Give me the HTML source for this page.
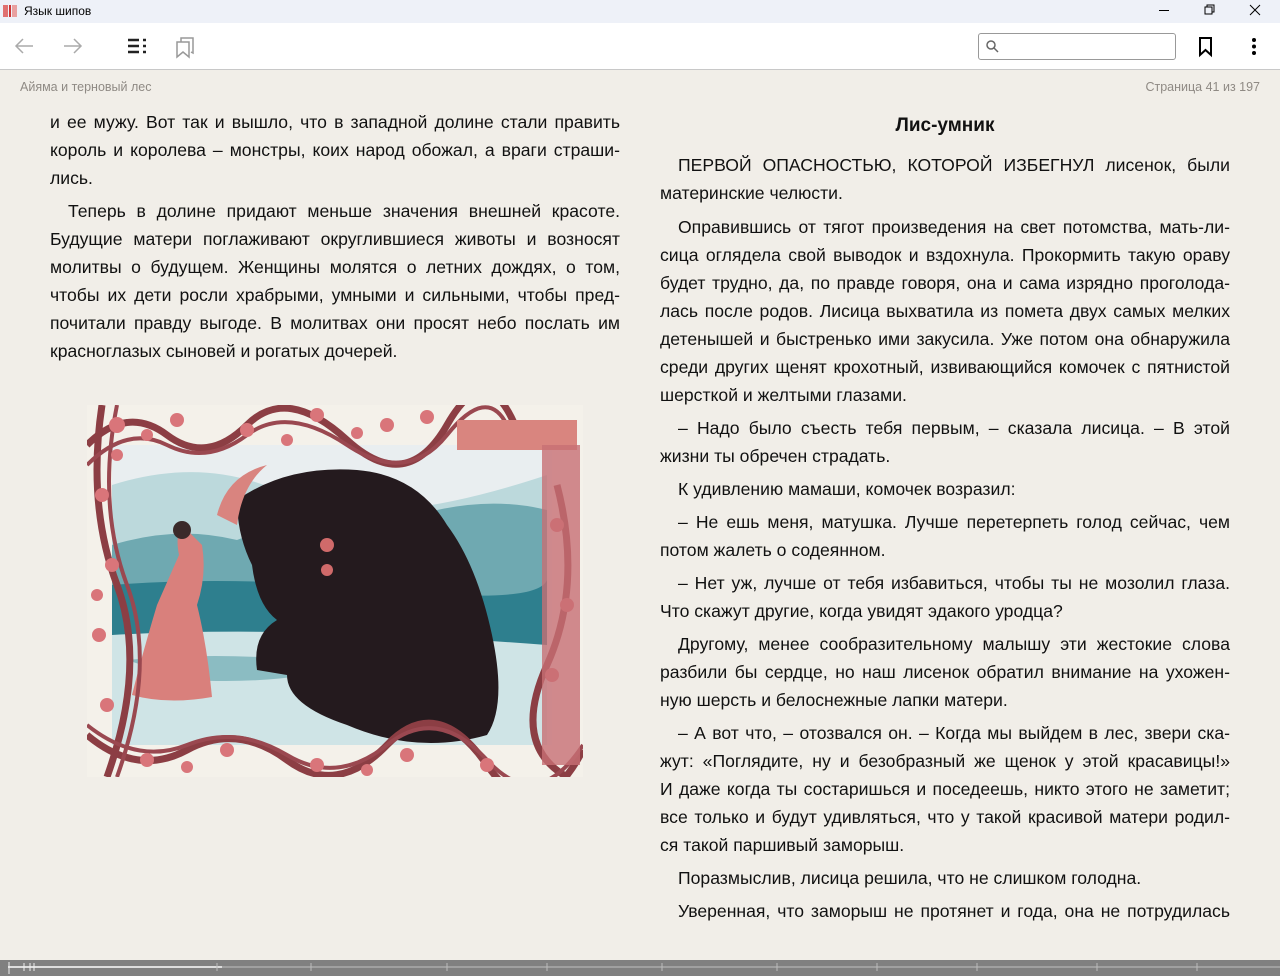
<!DOCTYPE html>
<html><head><meta charset="utf-8"><style>
*{margin:0;padding:0;box-sizing:border-box}
body{width:1280px;height:976px;overflow:hidden;background:#f1eee8;font-family:"Liberation Sans",sans-serif;position:relative}
#tb{position:absolute;left:0;top:0;width:1280px;height:23px;background:#eef1f8;font-size:12px;color:#000}
#tool{position:absolute;left:0;top:23px;width:1280px;height:47px;background:#fff;border-bottom:1px solid #c8c8c8}
.l{position:absolute;font-size:17.6px;color:#111;line-height:22px;height:22px;white-space:nowrap}
.j{text-align:justify;text-align-last:justify}
.i{padding-left:18px}
.L{left:50px;width:570px}.R{left:660px;width:570px}
.hd{position:absolute;top:80px;font-size:12.5px;color:#8f8a84}
#bar{position:absolute;left:0;top:960px;width:1280px;height:16px;background:#808080}
</style></head><body>
<div id="tb">
<svg style="position:absolute;left:2px;top:4px" width="16" height="14"><rect x="1" y="1" width="5" height="12" fill="#e07070"/><rect x="7" y="1" width="2" height="12" fill="#c33"/><rect x="10" y="1" width="5" height="12" fill="#e9a0a0"/></svg>
<span style="position:absolute;left:24px;top:4px">Язык шипов</span>
<svg style="position:absolute;left:1150px;top:4px" width="120" height="14" fill="none" stroke="#000" stroke-width="1"><line x1="9" y1="6.5" x2="19" y2="6.5"/><rect x="55" y="3" width="7" height="7"/><path d="M57 3V1h7v7h-2"/><path d="M100 1l10 10M110 1l-10 10"/></svg>
</div>
<div id="tool">
<svg style="position:absolute;left:0;top:0" width="210" height="47" fill="none" stroke-width="1.5">
<path d="M33 23H16M23 16l-7 7 7 7" stroke="#aaa"/>
<path d="M64 23h17M74 16l7 7-7 7" stroke="#aaa"/>
<g stroke="#222" stroke-width="2.4"><path d="M128 17h11M128 23h11M128 29h11M143 17h3M143 23h3M143 29h3"/></g>
<path d="M177 19h12v15l-6-5-6 5z M181 19v-4h12v15l-2-1" stroke="#999"/>
</svg>
<div style="position:absolute;left:978px;top:10px;width:198px;height:27px;border:1px solid #999;border-radius:3px"></div>
<svg style="position:absolute;left:985px;top:16px" width="14" height="14" fill="none" stroke="#666" stroke-width="1.5"><circle cx="6" cy="6" r="4"/><path d="M9 9l4 4"/></svg>
<svg style="position:absolute;left:1196px;top:13px" width="20" height="22" fill="none" stroke="#000" stroke-width="2"><path d="M4 2h11v17l-5.5-5L4 19z"/></svg>
<svg style="position:absolute;left:1248px;top:14px" width="12" height="20" fill="#000"><circle cx="6" cy="3" r="2"/><circle cx="6" cy="9.5" r="2"/><circle cx="6" cy="16" r="2"/></svg>
</div>
<div class="hd" style="left:20px">Айяма и терновый лес</div>
<div class="hd" style="right:20px">Страница 41 из 197</div>

<div class="l L j" style="top:111px">и ее мужу. Вот так и вышло, что в западной долине стали править</div>
<div class="l L j" style="top:139px">король и королева – монстры, коих народ обожал, а враги страши-</div>
<div class="l L" style="top:167px">лись.</div>
<div class="l L j i" style="top:200px">Теперь в долине придают меньше значения внешней красоте.</div>
<div class="l L j" style="top:228px">Будущие матери поглаживают округлившиеся животы и возносят</div>
<div class="l L j" style="top:256px">молитвы о будущем. Женщины молятся о летних дождях, о том,</div>
<div class="l L j" style="top:284px">чтобы их дети росли храбрыми, умными и сильными, чтобы пред-</div>
<div class="l L j" style="top:312px">почитали правду выгоде. В молитвах они просят небо послать им</div>
<div class="l L" style="top:340px">красноглазых сыновей и рогатых дочерей.</div>

<svg style="position:absolute;left:87px;top:405px" width="496" height="372" viewBox="0 0 496 372">
<rect width="496" height="372" fill="#f4f1ea"/>
<rect x="25" y="40" width="440" height="300" fill="#e9eef0"/>
<path d="M25 80 Q120 50 200 90 T460 70 V140 H25z" fill="#bcd9dc"/>
<path d="M25 140 Q90 120 150 135 Q250 95 330 110 Q400 90 460 105 V200 H25z" fill="#6fa9b1"/>
<path d="M25 180 Q150 170 300 185 T460 175 V250 H25z" fill="#2e7f8e"/>
<path d="M25 230 Q200 220 460 240 V340 H25z" fill="#cfe4e6"/>
<path d="M40 255 Q150 245 260 260 Q200 280 100 275z" fill="#8bbcc2"/>
<path d="M150 95 Q200 60 270 65 Q330 70 360 120 Q390 160 405 230 Q420 300 400 330 Q330 350 260 320 Q200 300 200 270 L170 265 Q165 230 190 215 Q170 200 165 160 Q150 130 150 95z" fill="#241a1e"/>
<path d="M130 110 Q140 70 180 60 Q155 80 150 120z" fill="#d9847f"/>
<path d="M95 120 Q88 130 92 150 L70 200 Q55 250 45 290 Q80 300 125 292 Q120 240 110 200 Q120 170 115 140z" fill="#d9807c"/>
<circle cx="95" cy="125" r="9" fill="#3a2a2a"/>
<circle cx="240" cy="140" r="7" fill="#d06a6a"/><circle cx="240" cy="165" r="6" fill="#d06a6a"/>
<g fill="none" stroke="#8c3e44" stroke-width="7">
<path d="M0 40 Q40 0 80 30 T160 20 T260 35 T360 20 T430 25"/>
<path d="M0 330 Q50 372 100 345 T200 355 T300 340 T400 360 T496 345"/>
<path d="M15 0 Q0 100 30 180 T20 372"/>
<path d="M470 80 Q496 180 460 260 T480 372"/>
</g>
<g fill="none" stroke="#9a4850" stroke-width="4">
<path d="M0 60 Q40 20 80 40 T160 30 T260 40 T360 30 T420 20"/>
<path d="M0 320 Q50 360 100 340 T200 350 T300 340 T400 355 T496 340"/>
<path d="M30 0 Q10 100 40 180 T30 372"/>
</g>
<g fill="#d9757a">
<circle cx="30" cy="20" r="8"/><circle cx="90" cy="15" r="7"/><circle cx="160" cy="25" r="7"/><circle cx="230" cy="10" r="7"/><circle cx="300" cy="20" r="7"/><circle cx="340" cy="12" r="7"/><circle cx="60" cy="30" r="6"/><circle cx="200" cy="35" r="6"/><circle cx="270" cy="28" r="6"/>
<circle cx="15" cy="90" r="7"/><circle cx="25" cy="160" r="7"/><circle cx="12" cy="230" r="7"/><circle cx="20" cy="300" r="7"/><circle cx="30" cy="50" r="6"/><circle cx="10" cy="190" r="6"/>
<circle cx="60" cy="355" r="7"/><circle cx="140" cy="345" r="7"/><circle cx="230" cy="360" r="7"/><circle cx="320" cy="350" r="7"/><circle cx="400" cy="360" r="7"/><circle cx="100" cy="362" r="6"/><circle cx="280" cy="365" r="6"/>
<circle cx="470" cy="120" r="7"/><circle cx="480" cy="200" r="7"/><circle cx="465" cy="270" r="7"/>
</g>
<rect x="370" y="15" width="120" height="30" fill="#d9857f"/>
<rect x="455" y="40" width="38" height="320" fill="#c76f74" opacity=".8"/>
</svg>

<div class="l R" style="top:115px;text-align:center;font-weight:bold;font-size:19px">Лис-умник</div>
<div class="l R j i" style="top:154px">ПЕРВОЙ ОПАСНОСТЬЮ, КОТОРОЙ ИЗБЕГНУЛ лисенок, были</div>
<div class="l R" style="top:182px">материнские челюсти.</div>
<div class="l R j i" style="top:216px">Оправившись от тягот произведения на свет потомства, мать-ли-</div>
<div class="l R j" style="top:244px">сица оглядела свой выводок и вздохнула. Прокормить такую ораву</div>
<div class="l R j" style="top:272px">будет трудно, да, по правде говоря, она и сама изрядно проголода-</div>
<div class="l R j" style="top:300px">лась после родов. Лисица выхватила из помета двух самых мелких</div>
<div class="l R j" style="top:328px">детенышей и быстренько ими закусила. Уже потом она обнаружила</div>
<div class="l R j" style="top:356px">среди других щенят крохотный, извивающийся комочек с пятнистой</div>
<div class="l R" style="top:384px">шерсткой и желтыми глазами.</div>
<div class="l R j i" style="top:417px">– Надо было съесть тебя первым, – сказала лисица. – В этой</div>
<div class="l R" style="top:445px">жизни ты обречен страдать.</div>
<div class="l R i" style="top:478px">К удивлению мамаши, комочек возразил:</div>
<div class="l R j i" style="top:511px">– Не ешь меня, матушка. Лучше перетерпеть голод сейчас, чем</div>
<div class="l R" style="top:539px">потом жалеть о содеянном.</div>
<div class="l R j i" style="top:572px">– Нет уж, лучше от тебя избавиться, чтобы ты не мозолил глаза.</div>
<div class="l R" style="top:600px">Что скажут другие, когда увидят эдакого уродца?</div>
<div class="l R j i" style="top:633px">Другому, менее сообразительному малышу эти жестокие слова</div>
<div class="l R j" style="top:661px">разбили бы сердце, но наш лисенок обратил внимание на ухожен-</div>
<div class="l R" style="top:689px">ную шерсть и белоснежные лапки матери.</div>
<div class="l R j i" style="top:722px">– А вот что, – отозвался он. – Когда мы выйдем в лес, звери ска-</div>
<div class="l R j" style="top:750px">жут: «Поглядите, ну и безобразный же щенок у этой красавицы!»</div>
<div class="l R j" style="top:778px">И даже когда ты состаришься и поседеешь, никто этого не заметит;</div>
<div class="l R j" style="top:806px">все только и будут удивляться, что у такой красивой матери родил-</div>
<div class="l R" style="top:834px">ся такой паршивый заморыш.</div>
<div class="l R i" style="top:867px">Поразмыслив, лисица решила, что не слишком голодна.</div>
<div class="l R j i" style="top:900px">Уверенная, что заморыш не протянет и года, она не потрудилась</div>

<div id="bar">
<div style="position:absolute;left:8px;top:6px;width:1272px;height:2px;background:#a0a0a0"></div>
<div style="position:absolute;left:8px;top:6px;width:214px;height:2px;background:#ddd"></div>
<svg style="position:absolute;left:0;top:0" width="1280" height="16" stroke="#bbb" stroke-width="1"><path d="M9 2v12M24 3v8M30 3v8M34 3v8" stroke="#eee"/><path d="M217 3v8M311 3v8M447 3v8M547 3v8M662 3v8M777 3v8M877 3v8M977 3v8M1097 3v8M1197 3v8"/></svg>
</div>
</body></html>
